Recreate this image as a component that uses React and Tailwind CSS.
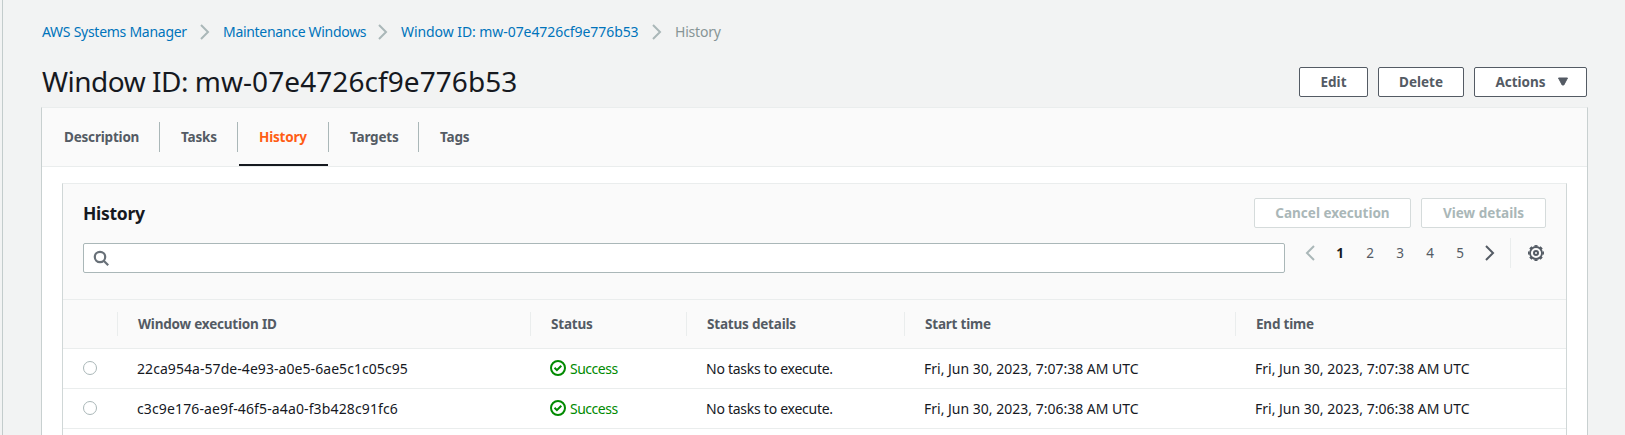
import React from "react";

const rows = [
  { id: "22ca954a-57de-4e93-a0e5-6ae5c1c05c95", tracking: "tracking-[0.06px]", time: "Fri, Jun 30, 2023, 7:07:38 AM UTC" },
  { id: "c3c9e176-ae9f-46f5-a4a0-f3b428c91fc6", tracking: "tracking-[0.13px]", time: "Fri, Jun 30, 2023, 7:06:38 AM UTC" },
];

const tabs = [
  { label: "Description", width: "w-[118px]" },
  { label: "Tasks", width: "w-[78px]" },
  { label: "History", width: "w-[91px]", active: true },
  { label: "Targets", width: "w-[90px]" },
  { label: "Tags", width: "w-[74px]" },
];

const pages = [1, 2, 3, 4, 5];

const GRID = "grid grid-cols-[54px_413px_156px_218px_331px_1fr]";

function Chevron({ className = "", left }) {
  return (
    <svg className={`shrink-0 ${className}`} width="16" height="16" viewBox="0 0 16 16" fill="none" stroke="currentColor" strokeWidth="2">
      <path d={left ? "M12 1 5 8l7 7" : "M4 1l7 7-7 7"} />
    </svg>
  );
}

function SearchIcon() {
  return (
    <svg className="text-[#687078]" width="16" height="16" viewBox="0 0 16 16" fill="none" stroke="currentColor" strokeWidth="2.2">
      <circle cx="7" cy="7" r="5.2" />
      <path d="m10.5 10.5 4.7 4.7" />
    </svg>
  );
}

function GearIcon() {
  return (
    <svg width="16" height="16" viewBox="0 0 16 16" fill="none" stroke="currentColor">
      <circle cx="8" cy="8" r="6" strokeWidth="1.8" />
      <circle cx="8" cy="8" r="7.2" strokeWidth="1.6" pathLength="80" strokeDasharray="5.6 4.4" strokeDashoffset="2.8" />
      <circle cx="8" cy="8" r="2" strokeWidth="2" />
    </svg>
  );
}

function Button({ className, children }) {
  return (
    <button className={`flex h-[30px] items-center justify-center rounded-[2px] border bg-white text-[13.5px] font-bold ${className}`}>
      {children}
    </button>
  );
}

function Header({ children }) {
  return (
    <div className="flex items-center">
      <span className="h-6 w-px bg-[#eaeded]" />
      <span className="pl-5">{children}</span>
    </div>
  );
}

function Success() {
  return (
    <span className="flex items-center gap-1 pl-5 text-[#008a00]">
      <svg className="relative -top-px" width="16" height="16" viewBox="0 0 16 16" fill="none" stroke="currentColor" strokeWidth="2">
        <circle cx="8" cy="8" r="7" />
        <path d="m4.5 7.8 2.4 2.4 4.4-4.4" />
      </svg>
      <span className="tracking-[-0.5px]">Success</span>
    </span>
  );
}

export default function App() {
  return (
    <div className="flex h-[435px] w-[1625px] overflow-hidden bg-[#f2f3f3] font-['Noto_Sans',sans-serif] text-[14px] leading-[22px] text-[#16191f]">
      <div className="w-[3px] shrink-0 border-r border-[#c3cccc]" />
      <div className="flex w-[1585px] shrink-0 flex-col pl-[38px]">
        <nav className="mt-[21px] flex h-[22px] items-center whitespace-nowrap pl-px text-[#0073bb]">
          <span className="w-[155px] tracking-[-0.27px]">AWS Systems Manager</span>
          <Chevron className="mr-[10px] text-[#aab7b8]" />
          <span className="w-[152px] tracking-[-0.3px]">Maintenance Windows</span>
          <Chevron className="mr-[10px] text-[#aab7b8]" />
          <span className="w-[248px] tracking-[-0.07px]">Window ID: mw-07e4726cf9e776b53</span>
          <Chevron className="mr-[10px] text-[#aab7b8]" />
          <span className="tracking-[-0.2px] text-[#879596]">History</span>
        </nav>
        <div className="mt-[23px] flex h-[30px] items-center">
          <h1 className="flex-1 pl-px text-[28px] leading-[30px] tracking-[0.07px]">
            <span className="tracking-[-0.5px]">Window ID: </span>mw-07e4726cf9e776b53
          </h1>
          <div className="flex gap-[10px] pr-px pt-px text-[#545b64]">
            <Button className="w-[69px] border-[#545b64]">Edit</Button>
            <Button className="w-[86px] border-[#545b64]">Delete</Button>
            <Button className="w-[113px] gap-[12px] border-[#545b64] pl-[2px]">
              <span>Actions</span>
              <svg width="10" height="9" viewBox="0 0 10 9" fill="currentColor" stroke="currentColor" strokeWidth="1" strokeLinejoin="round">
                <path d="M.5 1h9L5.8 8H4.2z" />
              </svg>
            </Button>
          </div>
        </div>
        <div className="mt-[11px] flex flex-1 flex-col border border-b-0 border-[#c8d0d0] border-t-[#eaeded] bg-white">
          <div className="flex h-[59px] items-center border-b border-[#eaeded] bg-[#fafafa] text-[13.5px] font-bold tracking-[-0.2px] text-[#545b64]">
            {tabs.map((t, i) => (
              <div key={t.label} className={`flex h-full items-center ${t.width}`}>
                <span className={`flex h-full flex-1 items-center border-b-2 pt-[2px] ${t.active ? "ml-px border-[#16191f] pl-5 text-[#ff5d15]" : "border-transparent"} ${i === 0 ? "pl-[22px]" : ""} ${i && !t.active ? "pl-[21px]" : ""}`}>
                  {t.label}
                </span>
                {i < tabs.length - 1 && <span className="h-[30px] w-px bg-[#aab7b8]" />}
              </div>
            ))}
          </div>
          <div className="mx-5 mt-4 flex flex-1 flex-col border border-b-0 border-[#d0d7d7] border-t-[#eaeded]">
            <div className="flex h-[115px] flex-col bg-[#fafafa] px-5 pt-[14px]">
              <div className="flex h-[30px] items-center gap-[10px] text-[#aab7b8]">
                <h2 className="flex-1 text-[17.5px] font-bold tracking-[-0.3px] text-[#16191f]">History</h2>
                <Button className="w-[157px] border-[#d5dbdb]">Cancel execution</Button>
                <Button className="w-[125px] border-[#d5dbdb]">View details</Button>
              </div>
              <div className="mt-[15px] flex items-start">
                <div className="flex h-[30px] w-[1202px] items-center rounded-[2px] border border-[#aab7b8] bg-white pl-[9px]">
                  <SearchIcon />
                </div>
                <div className="-mt-[5px] ml-[17px] flex h-[30px] items-center text-[13.5px] text-[#545b64]">
                  <Chevron left className="text-[#aab7b8]" />
                  <div className="ml-[7px] flex">
                    {pages.map((p) => (
                      <span key={p} className={`w-[30px] text-center ${p === 1 ? "font-bold text-[#16191f]" : ""}`}>
                        {p}
                      </span>
                    ))}
                  </div>
                  <Chevron className="ml-[7px]" />
                  <span className="ml-[12px] h-[30px] w-px bg-[#eaeded]" />
                  <span className="ml-[17px]">
                    <GearIcon />
                  </span>
                </div>
              </div>
            </div>
            <div className={`${GRID} h-[50px] border-y border-[#eaeded] bg-[#fafafa] text-[13.5px] font-bold tracking-[-0.2px] text-[#545b64]`}>
              <span />
              <Header>Window execution ID</Header>
              <Header>Status</Header>
              <Header>Status details</Header>
              <Header>Start time</Header>
              <Header>End time</Header>
            </div>
            {rows.map((r) => (
              <div key={r.id} className={`${GRID} h-10 shrink-0 items-center border-b border-[#eaeded] pt-px`}>
                <span className="relative -top-px ml-5 size-[14px] rounded-full border border-[#aab7b8] bg-white" />
                <span className={`pl-5 ${r.tracking}`}>{r.id}</span>
                <Success />
                <span className="pl-5 tracking-[-0.26px]">No tasks to execute.</span>
                <span className="pl-5">{r.time}</span>
                <span className="pl-5">{r.time}</span>
              </div>
            ))}
          </div>
        </div>
      </div>
    </div>
  );
}
